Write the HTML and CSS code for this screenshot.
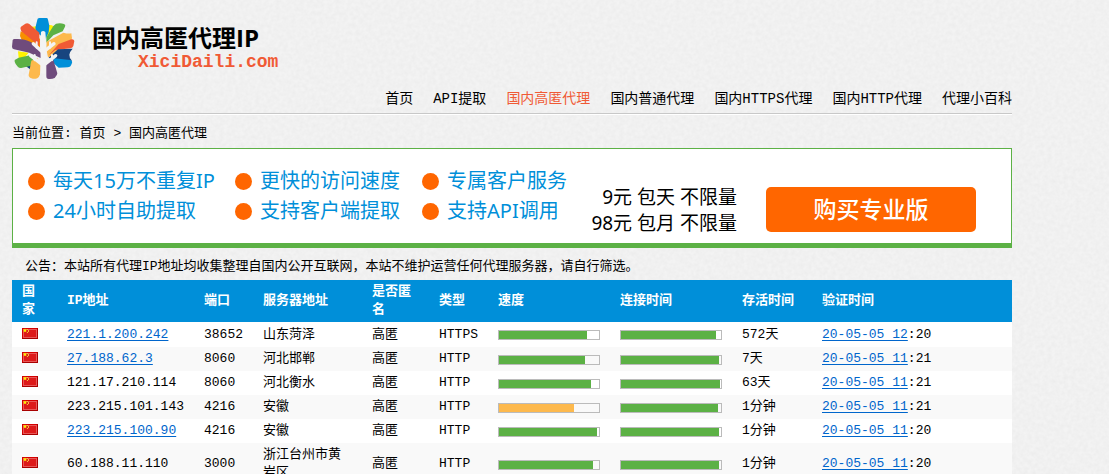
FILE: index.html
```html
<!DOCTYPE html>
<html lang="zh-CN">
<head>
<meta charset="utf-8">
<title>国内高匿代理IP</title>
<meta name="viewport" content="width=device-width, initial-scale=1">
<link rel="stylesheet" href="styles.css">
</head>
<body>
<svg class="defs" aria-hidden="true">
  <symbol id="flag" viewBox="0 0 16 11">
    <rect width="16" height="11" fill="#a80000"/>
    <rect width="15" height="10" fill="#d40000"/>
    <rect x="1" y="1" width="14" height="9" fill="#e85858"/>
    <rect x="2" y="2" width="12" height="7" fill="#dd1a1a"/>
    <path d="M1 1.500h1.400L3 .5l.6 1H5L4 2.700l.4 1.500L3 3.400l-1.400.8.4-1.500z" fill="#fff100"/>
    <path d="M5 1h1v1h1v2H6v1H5V4h1V2H5z" fill="#f8c33a"/>
  </symbol>
</svg>
<div class="page">
  <header class="header">
    <div class="brand">
      <svg class="logo" viewBox="12 18 192 186" aria-hidden="true">
        <path fill="#fff200" d="M118 38l14 2 8 6-10 18-16 10zM30 118l32 4-16 20-14-4zM72 44l18-2v28z"/>
        <path fill="#008fd9" d="M94 18h22q4 0 4 5l4 18-2 20-8 18-4 12-6-16-20-16-2-12 6-24q0-5 6-5z"/>
        <path fill="#f78f00" d="M38 58l58 22v26L42 86l-6-14z"/>
        <path fill="#f05a35" d="M38 52q-2-4 1-8l13-9q6-3 12 1l30 26v40L72 84 40 58z"/>
        <path fill="#5cb145" d="M115 92V76l21-34 8-7q14-3 24 1 6 2 3 8l-7 14-28 12z"/>
        <path fill="#fdb94d" d="M115 112V90l51-28q16 4 24 2l2 14-4 12-32 16-20 26-16 4z"/>
        <path fill="#f05a35" d="M122 130l30-34 38-14q8-1 9 5l-3 15q-2 6-8 7l-46 5z"/>
        <path fill="#18457f" d="M122 137l28-25 44-2q-8 8-10 18 0 12 8 18l-48 2zM48 158l23-14-2 30z"/>
        <path fill="#008fd9" d="M132 138l54 6q8 2 6 9l-4 9q-2 3-8 4l-28 1-20-18z"/>
        <path fill="#6f4b7c" d="M14 84q2-4 8-3 26-2 46 9l30 19v29L64 122l-46-10q-6-1-6-8zM115 152l20-12 13 44q0 6-8 14-8 4-18 3-7 0-7-8z"/>
        <path fill="#5cb145" d="M20 144l12-7 34-7 16 20-16 12-26 6q-6 1-10-3-8-8-10-16z"/>
        <path fill="#fdb94d" d="M70 146l18-8 9 20-1 29q-2 8-8 12-9 3-18 0-9-4-8-11z"/>
        <path class="trunk" d="M99 60q6-6 13 0l3 36-2 48v38q-6 6-14 0v-38l-2-48z"/>
        <path class="branch" d="M76 95l24 22M138 95l-26 20M68 131l32 25M143 131l-31 25"/>
        <path class="twig" d="M86 91v16M126 91v16M80 129v16M132 129v16"/>
      </svg>
      <div class="brand-text">
        <h1 class="title">国内高匿代理IP</h1>
        <p class="domain">XiciDaili.com</p>
      </div>
    </div>
    <nav class="nav">
      <a href="#">首页</a>
      <a href="#">API提取</a>
      <a href="#" class="current">国内高匿代理</a>
      <a href="#">国内普通代理</a>
      <a href="#">国内HTTPS代理</a>
      <a href="#">国内HTTP代理</a>
      <a href="#">代理小百科</a>
    </nav>
  </header>

  <p class="crumbs">当前位置: <a href="#">首页</a> &gt; 国内高匿代理</p>

  <section class="banner">
    <ul class="features">
      <li>每天15万不重复IP</li>
      <li>更快的访问速度</li>
      <li>专属客户服务</li>
      <li>24小时自助提取</li>
      <li>支持客户端提取</li>
      <li>支持API调用</li>
    </ul>
    <div class="offer">
      <p class="prices">9元 包天 不限量<br>98元 包月 不限量</p>
      <a class="buy" href="#">购买专业版</a>
    </div>
  </section>

  <p class="notice">公告：本站所有代理IP地址均收集整理自国内公开互联网，本站不维护运营任何代理服务器，请自行筛选。</p>

  <table class="proxies">
    <colgroup>
      <col class="c-country"><col class="c-ip"><col class="c-port"><col class="c-place"><col class="c-anon"><col class="c-type"><col class="c-meter"><col class="c-meter"><col class="c-alive"><col class="c-checked">
    </colgroup>
    <thead>
      <tr>
        <th>国家</th><th>IP地址</th><th>端口</th><th>服务器地址</th><th>是否匿名</th><th>类型</th><th>速度</th><th>连接时间</th><th>存活时间</th><th>验证时间</th>
      </tr>
    </thead>
    <tbody>
      <tr>
        <td><svg class="flag" role="img" aria-label="中国"><use href="#flag"/></svg></td>
        <td><a href="#">221.1.200.242</a></td><td>38652</td><td>山东菏泽</td><td>高匿</td><td>HTTPS</td>
        <td><div class="bar"><div class="fill" style="width:88%"></div></div></td>
        <td><div class="bar"><div class="fill" style="width:95%"></div></div></td>
        <td>572天</td><td><a href="#">20-05-05 12</a>:20</td>
      </tr>
      <tr>
        <td><svg class="flag" role="img" aria-label="中国"><use href="#flag"/></svg></td>
        <td><a href="#">27.188.62.3</a></td><td>8060</td><td>河北邯郸</td><td>高匿</td><td>HTTP</td>
        <td><div class="bar"><div class="fill" style="width:86%"></div></div></td>
        <td><div class="bar"><div class="fill" style="width:98%"></div></div></td>
        <td>7天</td><td><a href="#">20-05-05 11</a>:21</td>
      </tr>
      <tr>
        <td><svg class="flag" role="img" aria-label="中国"><use href="#flag"/></svg></td>
        <td>121.17.210.114</td><td>8060</td><td>河北衡水</td><td>高匿</td><td>HTTP</td>
        <td><div class="bar"><div class="fill" style="width:92%"></div></div></td>
        <td><div class="bar"><div class="fill" style="width:99%"></div></div></td>
        <td>63天</td><td><a href="#">20-05-05 11</a>:21</td>
      </tr>
      <tr>
        <td><svg class="flag" role="img" aria-label="中国"><use href="#flag"/></svg></td>
        <td>223.215.101.143</td><td>4216</td><td>安徽</td><td>高匿</td><td>HTTP</td>
        <td><div class="bar"><div class="fill medium" style="width:75%"></div></div></td>
        <td><div class="bar"><div class="fill" style="width:97%"></div></div></td>
        <td>1分钟</td><td><a href="#">20-05-05 11</a>:21</td>
      </tr>
      <tr>
        <td><svg class="flag" role="img" aria-label="中国"><use href="#flag"/></svg></td>
        <td><a href="#">223.215.100.90</a></td><td>4216</td><td>安徽</td><td>高匿</td><td>HTTP</td>
        <td><div class="bar"><div class="fill" style="width:98%"></div></div></td>
        <td><div class="bar"><div class="fill" style="width:98%"></div></div></td>
        <td>1分钟</td><td><a href="#">20-05-05 11</a>:20</td>
      </tr>
      <tr>
        <td><svg class="flag" role="img" aria-label="中国"><use href="#flag"/></svg></td>
        <td>60.188.11.110</td><td>3000</td><td>浙江台州市黄岩区</td><td>高匿</td><td>HTTP</td>
        <td><div class="bar"><div class="fill" style="width:94%"></div></div></td>
        <td><div class="bar"><div class="fill" style="width:98%"></div></div></td>
        <td>1分钟</td><td><a href="#">20-05-05 11</a>:20</td>
      </tr>
    </tbody>
  </table>
</div>
</body>
</html>
```
FILE: styles.css
```css
* { box-sizing: border-box; }

html { scrollbar-width: none; }

body {
  margin: 0;
  color: #000;
  background: #f3f3f3 url("data:image/svg+xml,%3Csvg xmlns='http://www.w3.org/2000/svg' width='200' height='200'%3E%3Cfilter id='n' x='0' y='0' width='100%25' height='100%25'%3E%3CfeTurbulence type='fractalNoise' baseFrequency='.25' numOctaves='3' stitchTiles='stitch'/%3E%3CfeColorMatrix values='0 0 0 0 0 0 0 0 0 0 0 0 0 0 0 .04 0 0 0 -.01'/%3E%3C/filter%3E%3Crect width='200' height='200' filter='url(%23n)'/%3E%3C/svg%3E");
  font: 13px/18px "Liberation Mono", "Noto Sans CJK SC", monospace;
}

h1, p, ul { margin: 0; padding: 0; }

a { color: inherit; text-decoration: none; }

.defs { display: none; }

.page { max-width: 1000px; margin: 0 12px; }

.header {
  padding-top: 18px;
  border-bottom: 1px solid #c8c8c8;
  box-shadow: 0 1px #fff;
}

.brand { display: flex; gap: 16px; }

.logo { width: 64px; height: 62px; }

.trunk { fill: #f3f3f3; }

.branch, .twig {
  fill: none;
  stroke: #f3f3f3;
  stroke-width: 10;
  stroke-linecap: round;
}

.twig { stroke-width: 6; }

.brand-text { padding-top: 6px; }

.title {
  font: bold 24px/28px "Open Sans", "Noto Sans CJK SC", sans-serif;
}

.domain {
  padding-left: 46px;
  color: #f05a35;
  font-size: 18px;
  font-weight: bold;
  line-height: 20px;
}

.nav {
  display: flex;
  flex-wrap: wrap;
  justify-content: flex-end;
  gap: 0 20px;
  padding: 9px 0 4px;
  font-size: 14px;
  line-height: 20px;
}

.current { color: #f05a35; }

.crumbs { padding: 11px 0 5px; }

.banner {
  display: flex;
  flex-wrap: wrap;
  align-items: center;
  min-height: 100px;
  padding: 0 35px 0 15px;
  background: #fff;
  border: 1px solid #5cb145;
  border-bottom-width: 5px;
  font-family: "Noto Sans", "Noto Sans CJK SC", sans-serif;
}

.features {
  display: grid;
  grid-template-columns: 207px 187px 148px;
  list-style: none;
  color: #008fd9;
  font-size: 20px;
  line-height: 30px;
}

.features li { display: flex; align-items: center; gap: 8px; }

.features li::before {
  content: "";
  width: 17px;
  height: 17px;
  border-radius: 50%;
  background: #f60;
}

.offer {
  display: flex;
  flex: 1;
  align-items: center;
  justify-content: flex-end;
  gap: 29px;
  padding-top: 27px;
}

.prices { text-align: right; font-size: 19px; line-height: 26px; white-space: nowrap; }

.buy {
  width: 210px;
  border-radius: 5px;
  background: #f60;
  color: #fff;
  font-size: 23px;
  font-weight: 500;
  line-height: 45px;
  text-align: center;
}

.notice { padding: 10px 13px 4px; }

.proxies {
  width: 100%;
  table-layout: fixed;
  border-collapse: collapse;
  background: #fff;
}

.c-country { width: 4.5%; }
.c-ip { width: 13.7%; }
.c-port { width: 5.9%; }
.c-place { width: 10.9%; }
.c-anon { width: 6.7%; }
.c-type { width: 5.9%; }
.c-meter { width: 12.2%; }
.c-alive { width: 8%; }
.c-checked { width: 20%; }

th, td { padding: 3px 10px; text-align: left; vertical-align: middle; }

th { background: #008fd9; color: #fff; }

tbody tr:first-child { height: 25px; }

tbody tr:nth-child(even) { background: #f9f9f9; }

td a { color: #06c; text-decoration: underline 1px; text-underline-offset: 2px; }

.flag { display: block; width: 16px; height: 11px; margin-bottom: 3px; }

.bar {
  width: 100%;
  height: 10px;
  margin-top: 1px;
  border: 1px solid #bbb;
}

.fill { height: 100%; background: #5cb145; }

.fill.medium { background: #fdb94d; }
```
